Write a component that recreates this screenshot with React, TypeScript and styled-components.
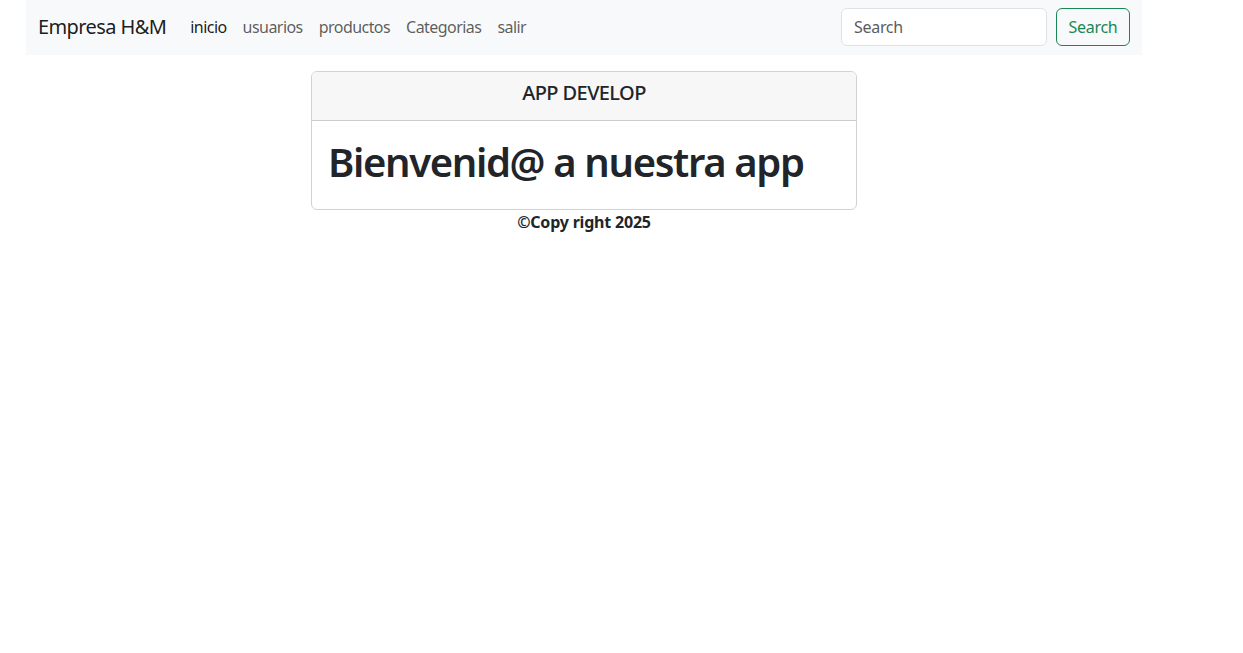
import React from "react";
import styled, { createGlobalStyle } from "styled-components";

const Global = createGlobalStyle`
  html, body { margin: 0; padding: 0; background: #fff; }
  body {
    font-family: "Noto Sans", "Open Sans", sans-serif;
    font-size: 16px;
    line-height: 1.5;
    color: #212529;
  }
  * { box-sizing: border-box; }
`;

const Page = styled.div`
  width: 1140px;
  padding: 0 12px;
  margin-left: 14px;
`;

const Nav = styled.nav`
  display: flex;
  align-items: center;
  height: 55px;
  padding: 8px 12px 9px;
  background: #f8f9fa;
`;

const Brand = styled.a`
  font-size: 20px;
  color: rgba(0, 0, 0, 0.9);
  text-decoration: none;
  margin-right: 16px;
  letter-spacing: -0.6px;
`;

const Links = styled.ul`
  display: flex;
  list-style: none;
  margin: 0;
  padding: 0;
  flex: 1;
`;

const Link = styled.a<{ $active?: boolean }>`
  display: block;
  padding: 8px;
  font-size: 16px;
  color: ${(p) => (p.$active ? "rgba(0,0,0,0.9)" : "rgba(0,0,0,0.65)")};
  text-decoration: none;
  letter-spacing: -0.55px;
`;

const Form = styled.form`
  display: flex;
  gap: 9px;
`;

const Input = styled.input`
  width: 206px;
  height: 38px;
  padding: 6px 12px;
  font: inherit;
  font-size: 16px;
  color: #212529;
  background: #fff;
  border: 1px solid #dee2e6;
  border-radius: 6px;
  outline: none;
  letter-spacing: -0.3px;
  &::placeholder { color: #595c5f; }
`;

const Button = styled.button`
  height: 38px;
  width: 74px;
  padding: 6px 0;
  font: inherit;
  font-size: 16px;
  color: #198754;
  background: transparent;
  border: 1px solid #198754;
  border-radius: 6px;
  letter-spacing: -0.3px;
`;

const Row = styled.div`
  display: flex;
  flex-direction: column;
  align-items: center;
  margin-top: 16px;
`;

const Card = styled.div`
  width: 546px;
  border: 1px solid rgba(0, 0, 0, 0.175);
  border-radius: 6px;
  overflow: hidden;
`;

const CardHeader = styled.div`
  height: 49px;
  display: flex;
  align-items: center;
  justify-content: center;
  padding-bottom: 6px;
  background: #f7f7f7;
  border-bottom: 1px solid rgba(0, 0, 0, 0.175);
  font-size: 20px;
  font-weight: 500;
  letter-spacing: -0.6px;
  color: #212529;
`;

const CardBody = styled.div`
  padding: 17px 16px 15px;
`;

const Title = styled.h1`
  margin: 0 0 8px;
  font-size: 40px;
  line-height: 1.2;
  font-weight: 600;
  letter-spacing: -1.35px;
  color: #212529;
`;

const Footer = styled.p`
  margin: 0;
  font-weight: 700;
  font-size: 16px;
  letter-spacing: -0.2px;
`;

export default function App() {
  return (
    <>
      <Global />
      <Page>
        <Nav>
          <Brand href="#">Empresa H&amp;M</Brand>
          <Links>
            <li><Link $active href="#">inicio</Link></li>
            <li><Link href="#">usuarios</Link></li>
            <li><Link href="#">productos</Link></li>
            <li><Link href="#">Categorias</Link></li>
            <li><Link href="#">salir</Link></li>
          </Links>
          <Form onSubmit={(e) => e.preventDefault()}>
            <Input placeholder="Search" />
            <Button type="submit">Search</Button>
          </Form>
        </Nav>
        <Row>
          <Card>
            <CardHeader>APP DEVELOP</CardHeader>
            <CardBody>
              <Title>Bienvenid@ a nuestra app</Title>
            </CardBody>
          </Card>
          <Footer>©Copy right 2025</Footer>
        </Row>
      </Page>
    </>
  );
}
